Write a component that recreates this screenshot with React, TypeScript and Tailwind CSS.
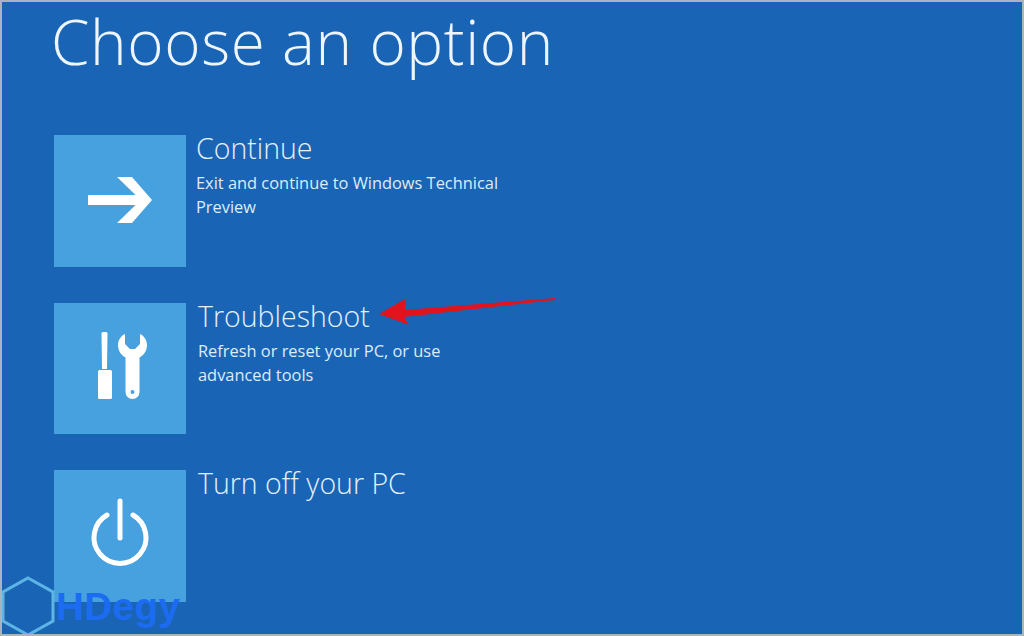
import type { ReactNode } from "react";

const OPTIONS: { title: string; desc?: string[]; gap: string; icon: ReactNode }[] = [
  {
    title: "Continue",
    desc: ["Exit and continue to Windows Technical", "Preview"],
    gap: "gap-[10px]",
    icon: (
      <svg width="132" height="132" viewBox="0 0 132 132" fill="#fff">
        <path d="M34 60h47.500L63 42h15l20 23-20 23H63l18.500-18H34z" />
      </svg>
    ),
  },
  {
    title: "Troubleshoot",
    desc: ["Refresh or reset your PC, or use", "advanced tools"],
    gap: "gap-[12px]",
    icon: (
      <svg width="132" height="132" viewBox="0 0 132 132" fill="#fff">
        <path d="M49 29h3a1.500 1.500 0 0 1 1.500 1.500L53 66h-5l-.5-35.500A1.500 1.500 0 0 1 49 29z" />
        <rect x="44" y="67" width="14" height="29" rx="1.500" />
        <path
          fillRule="evenodd"
          d="M71 31c-4 2-7 6-7 11 0 5.500 3 10 7.500 12.500V89a7 7 0 0 0 14 0V54.500C90 52 93 47.500 93 42c0-5-3-9-7-11v10l-5 5h-5l-5-5zM78.500 87a2 2 0 1 0 0 4 2 2 0 0 0 0-4z"
        />
      </svg>
    ),
  },
  {
    title: "Turn off your PC",
    gap: "gap-[12px]",
    icon: (
      <svg width="132" height="132" viewBox="0 0 132 132" fill="none" stroke="#fff" strokeWidth="5" strokeLinecap="round">
        <path d="M66 31v37" />
        <path d="M53 45a26 26 0 1 0 26 0" />
      </svg>
    ),
  },
];

export default function App() {
  return (
    <div className="relative h-[636px] w-[1024px] overflow-hidden border-2 border-[#a9b4c0] bg-[#1a64b6] font-['Open_Sans',sans-serif] text-white">
      <h1 className="ml-[49px] h-[133px] text-[62px] leading-[78px] font-light tracking-[0.6px] text-[#eef6fc]">
        Choose an option
      </h1>

      <div className="ml-[52px] flex flex-col gap-[36px]">
        {OPTIONS.map((o) => (
          <div key={o.title} className={`flex h-[131.500px] ${o.gap}`}>
            <div className="h-[131.500px] w-[132px] shrink-0 bg-[#47a1de]">{o.icon}</div>
            <div>
              <div className="text-[28.500px] leading-[26px] font-light text-[#e3f0fa]">{o.title}</div>
              {o.desc && (
                <div className="mt-[10px] text-[16.400px] leading-[24px] font-normal text-[#dcecf8]">
                  {o.desc.map((line) => (
                    <div key={line}>{line}</div>
                  ))}
                </div>
              )}
            </div>
          </div>
        ))}
      </div>

      {/* red annotation arrow */}
      <svg className="absolute top-[293px] left-[376px]" width="182" height="36" viewBox="0 0 182 36" fill="#e0141c">
        <path d="M1 19 L27 4 L27 15 L177 3 L177 5 L26 22 L31 30 Z" />
      </svg>

      {/* watermark */}
      <svg className="absolute top-[574px] left-0" width="56" height="60" viewBox="0 0 56 60" fill="none" stroke="#5db5e6" strokeWidth="3">
        <path d="M26 2 L51 16 V45 L26 59 L1 45 V16 Z" />
      </svg>
      <div className="absolute top-[582px] left-[54px] font-['Liberation_Sans',sans-serif] text-[38.500px] leading-[46px] font-bold tracking-[0.5px] text-[#1c6cf2]">
        HDegy
      </div>
    </div>
  );
}
